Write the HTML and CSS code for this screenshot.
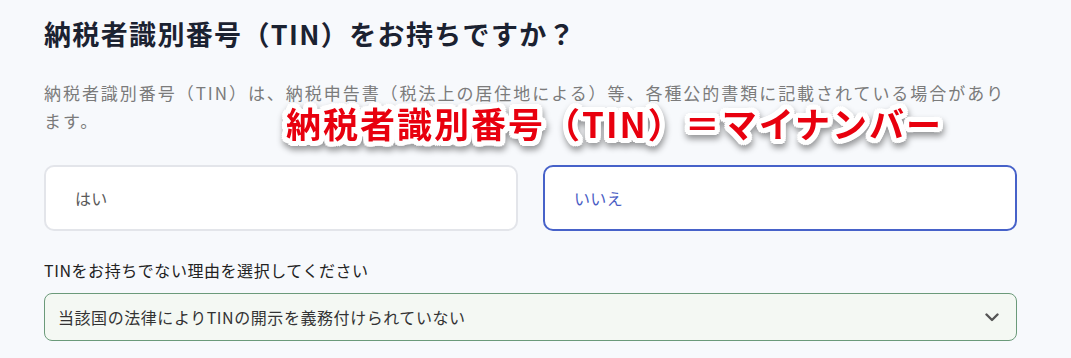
FILE: index.html
```html
<!DOCTYPE html>
<html lang="ja">
<head>
<meta charset="utf-8">
<title>TIN</title>
<link rel="stylesheet" href="styles.css">
</head>
<body>
<main class="page">
  <h1 class="title">納税者識別番号（TIN）をお持ちですか？</h1>
  <div class="desc-wrap">
    <p class="desc">納税者識別番号（TIN）は、納税申告書（税法上の居住地による）等、各種公的書類に記載されている場合があります。</p>
    <div class="callout">納税者識別番号（TIN）＝マイナンバー</div>
  </div>
  <div class="choices">
    <button class="choice" type="button">はい</button>
    <button class="choice is-selected" type="button">いいえ</button>
  </div>
  <div class="field-label">TINをお持ちでない理由を選択してください</div>
  <div class="select">
    <span class="select-value">当該国の法律によりTINの開示を義務付けられていない</span>
    <svg class="chevron" width="14" height="9" viewBox="0 0 14 9" aria-hidden="true"><path d="M1.5 1.5 L7 7 L12.5 1.5" fill="none" stroke="#555" stroke-width="2.4" stroke-linecap="round" stroke-linejoin="round"/></svg>
  </div>
</main>
</body>
</html>
```
FILE: styles.css
```css
* { box-sizing: border-box; }
html, body { margin: 0; padding: 0; }
body {
  background: #f7f9fc;
  font-family: "Noto Sans CJK JP", "Noto Sans", sans-serif;
  width: 1071px;
  height: 358px;
  overflow: hidden;
}
.page {
  padding: 14px 54px 0 44px;
}
.title {
  margin: 0;
  font-size: 27px;
  line-height: 39px;
  font-weight: 700;
  letter-spacing: 0.05em;
  color: #1b2231;
}
.desc-wrap {
  position: relative;
  margin-top: 26px;
}
.desc {
  margin: 0;
  font-size: 17px;
  line-height: 28px;
  letter-spacing: 0.115em;
  color: #7b7b7b;
}
.callout {
  position: absolute;
  left: 242px;
  top: 24px;
  font-size: 35px;
  line-height: 40px;
  font-weight: 700;
  letter-spacing: 2px;
  color: #e8000e;
  white-space: nowrap;
  text-shadow:
    0 0 3px #fff, 0 0 3px #fff,
    3px 0 0 #fff, -3px 0 0 #fff, 0 3px 0 #fff, 0 -3px 0 #fff,
    5px 0 0 #fff, -5px 0 0 #fff, 0 5px 0 #fff, 0 -5px 0 #fff,
    4px 4px 0 #fff, -4px 4px 0 #fff, 4px -4px 0 #fff, -4px -4px 0 #fff,
    2px 5px 0 #fff, -2px 5px 0 #fff, 2px -5px 0 #fff, -2px -5px 0 #fff,
    5px 2px 0 #fff, -5px 2px 0 #fff, 5px -2px 0 #fff, -5px -2px 0 #fff;
  filter: drop-shadow(1px 4px 3px rgba(0, 0, 0, 0.4));
}
.choices {
  display: grid;
  grid-template-columns: 1fr 1fr;
  gap: 25px;
  margin-top: 30px;
}
.choice {
  height: 66px;
  border: 2px solid #e3e5ea;
  border-radius: 10px;
  background: #fff;
  text-align: left;
  padding: 0 0 0 29px;
  font-family: inherit;
  font-size: 16px;
  color: #5a5a5a;
  letter-spacing: 0.02em;
}
.choice.is-selected {
  border-color: #4762c9;
  color: #4a5dc4;
}
.field-label {
  margin-top: 27px;
  font-size: 16px;
  line-height: 24px;
  letter-spacing: 0.035em;
  color: #222;
}
.select {
  margin-top: 11px;
  height: 48px;
  border: 1px solid #6b9a7a;
  border-radius: 8px;
  background: #f4f8f3;
  display: flex;
  align-items: center;
  justify-content: space-between;
  padding: 0 17px 0 13px;
}
.select-value {
  font-size: 16px;
  color: #333;
  letter-spacing: 0.035em;
}
.chevron { display: block; }
```
